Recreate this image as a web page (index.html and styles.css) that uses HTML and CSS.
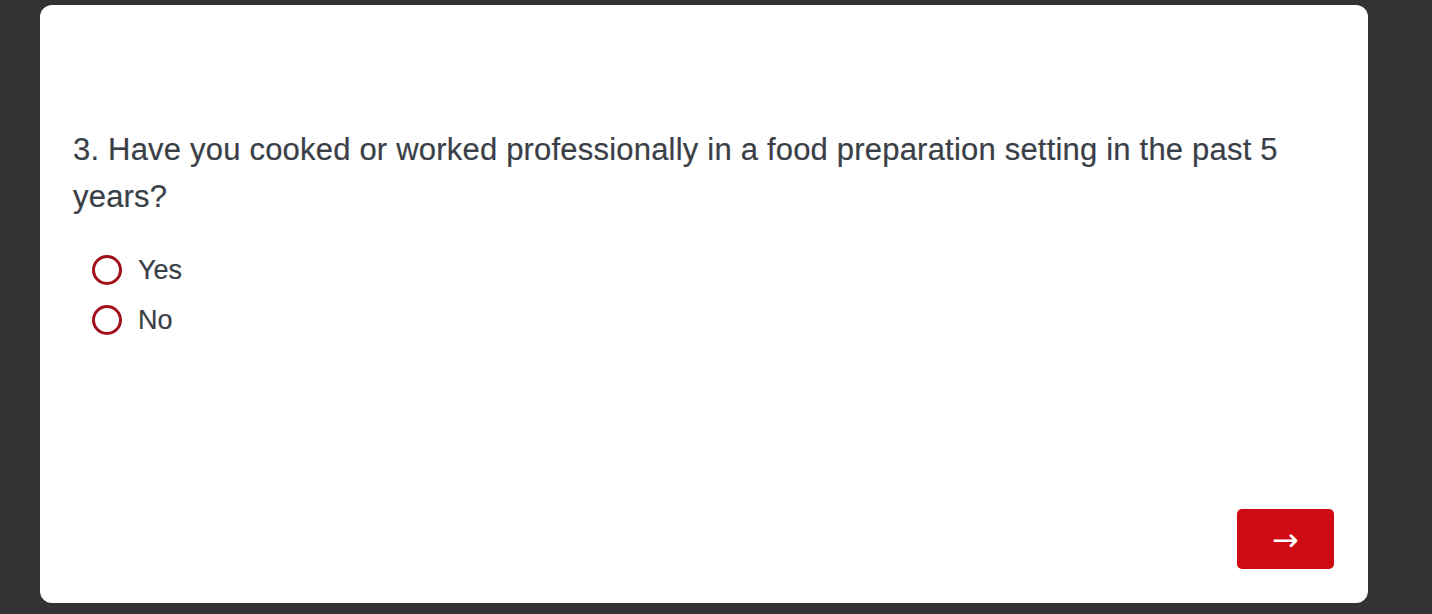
FILE: index.html
```html
<!DOCTYPE html>
<html lang="en">
<head>
  <meta charset="UTF-8" />
  <meta name="viewport" content="width=device-width, initial-scale=1.0" />
  <title>Survey | Question 3</title>
  <link rel="stylesheet" href="styles.css">
</head>
<body>
  <div class="survey-card">
    <div class="question">
      <p class="question-text">3. Have you cooked or worked professionally in a food preparation setting in the past 5 years?</p>
      <div class="choices">
        <label class="choice">
          <input type="radio" name="q3" value="yes" />
          <span class="radio-ring"></span>
          <span class="choice-label">Yes</span>
        </label>
        <label class="choice">
          <input type="radio" name="q3" value="no" />
          <span class="radio-ring"></span>
          <span class="choice-label">No</span>
        </label>
      </div>
    </div>
    <div class="survey-footer">
      <button class="next-btn" type="button">&rarr;</button>
    </div>
  </div>
</body>
</html>
```

FILE: styles.css
```css
body {
  font-family: 'Liberation Sans', Arial, sans-serif;
  background-color: #333333;
  color: #3a3f47;
  margin: 0;
  padding: 0;
}

.survey-card {
  display: flex;
  flex-direction: column;
  box-sizing: border-box;
  width: 1328px;
  height: 598px;
  margin: 5px 0 0 40px;
  padding: 0 34px 34px 33px;
  background-color: #fff;
  border-radius: 12px;
}

.question {
  padding-top: 121px;
}

.question-text {
  margin: 0;
  font-size: 31px;
  line-height: 47px;
  letter-spacing: 0.2px;
  -webkit-text-stroke: 0.2px #3a3f47;
}

.choices {
  display: flex;
  flex-direction: column;
  margin-top: 25px;
  padding-left: 19px;
}

.choice {
  display: flex;
  align-items: center;
  height: 50px;
  cursor: pointer;
}

.choice input {
  display: none;
}

.radio-ring {
  box-sizing: border-box;
  width: 30px;
  height: 30px;
  border: 3.5px solid #a10f1a;
  border-radius: 50%;
  margin-right: 16px;
}

.choice input:checked + .radio-ring {
  background: radial-gradient(circle, #a10f1a 40%, transparent 45%);
}

.choice-label {
  font-size: 27px;
  -webkit-text-stroke: 0.2px #3a3f47;
}

.survey-footer {
  display: flex;
  justify-content: flex-end;
  margin-top: auto;
}

.next-btn {
  width: 97px;
  height: 60px;
  padding-top: 2px;
  border: none;
  border-radius: 5px;
  background-color: #d00a12;
  color: #fff;
  font-family: 'DejaVu Sans', sans-serif;
  font-size: 32px;
  line-height: 1;
  cursor: pointer;
}

.next-btn:hover {
  background-color: #b30000;
}
```
